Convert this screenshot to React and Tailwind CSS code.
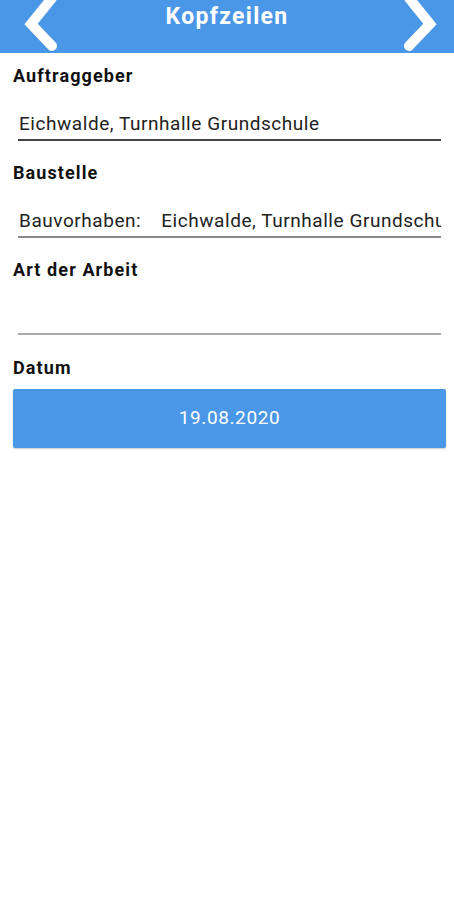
export default function App() {
  const font = { fontFamily: 'Roboto, "Noto Sans", sans-serif' };
  return (
    <div className="w-[454px] h-[900px] bg-white" style={font}>
      <div className="h-[53px] bg-[#4a97e8] flex items-start justify-between">
        <svg width="70" height="53" viewBox="0 0 70 53" className="shrink-0">
          <polyline points="52,-2 31,24 52,46" fill="none" stroke="white" strokeWidth="10" strokeLinecap="round" strokeLinejoin="miter" />
        </svg>
        <div className="flex-1 text-center text-white font-bold text-[23px] tracking-[1.3px] leading-[26px] pt-[4px]">Kopfzeilen</div>
        <svg width="70" height="53" viewBox="0 0 70 53" className="shrink-0">
          <polyline points="25,-2 46,24 25,46" fill="none" stroke="white" strokeWidth="10" strokeLinecap="round" strokeLinejoin="miter" />
        </svg>
      </div>
      <div className="flex flex-col">
        <div className="mt-[13px] ml-[13px] text-[18px] tracking-[1.1px] leading-[20px] font-bold text-[#111]">Auftraggeber</div>
        <div className="ml-[18px] mr-[13px] pt-[26px] pb-[3px] border-b-2 border-[#444] text-[19px] tracking-[0.55px] leading-[24px] text-[#222] whitespace-nowrap overflow-hidden pl-[1px]">
          Eichwalde, Turnhalle Grundschule
        </div>
        <div className="mt-[22px] ml-[13px] text-[18px] tracking-[1.1px] leading-[20px] font-bold text-[#111]">Baustelle</div>
        <div className="ml-[18px] mr-[13px] pt-[26px] pb-[3px] border-b-2 border-[#8a8a8a] text-[19px] tracking-[0.55px] leading-[24px] text-[#222] whitespace-nowrap overflow-hidden pl-[1px]">
          Bauvorhaben:<span className="inline-block w-[20px]"></span>Eichwalde, Turnhalle Grundschule
        </div>
        <div className="mt-[22px] ml-[13px] text-[18px] tracking-[1.1px] leading-[20px] font-bold text-[#111]">Art der Arbeit</div>
        <div className="ml-[18px] mr-[13px] pt-[26px] pb-[3px] border-b-2 border-[#aaa] text-[19px] leading-[24px] text-[#222] whitespace-nowrap overflow-hidden">
          &nbsp;
        </div>
        <div className="mt-[23px] ml-[13px] text-[18px] tracking-[1.1px] leading-[20px] font-bold text-[#111]">Datum</div>
        <div className="mt-[11px] ml-[13px] mr-[8px] h-[59px] bg-[#4a97e8] rounded-[2px] shadow-[0_1px_2px_rgba(0,0,0,0.2)] flex items-center justify-center text-white text-[19px] tracking-[0.6px]">
          19.08.2020
        </div>
      </div>
    </div>
  );
}
